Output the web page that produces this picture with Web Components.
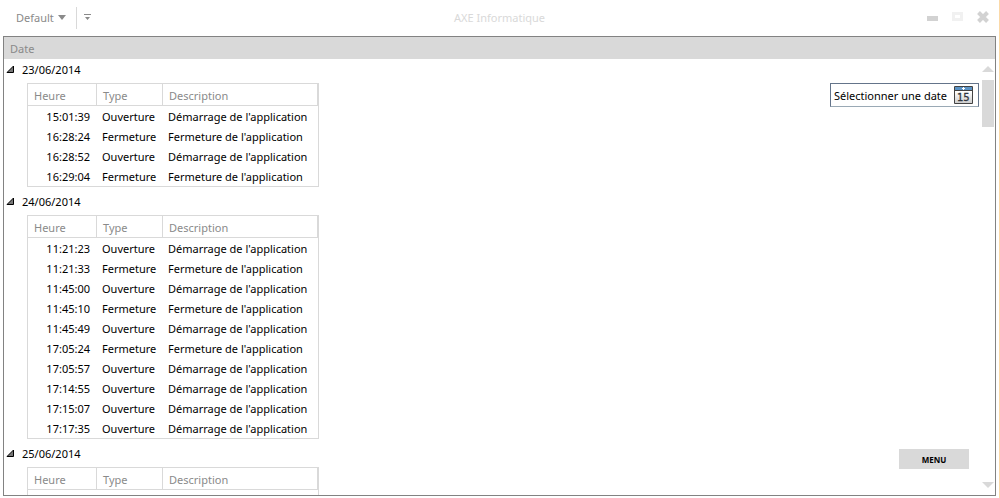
<!DOCTYPE html>
<html lang="fr">
<head>
<meta charset="utf-8">
<title>AXE Informatique</title>
<style>
html,body{height:100%}
body{margin:0;overflow:hidden;background:#fff;font:11px/20px "Noto Sans","Open Sans",sans-serif;color:#000}
</style>
</head>
<body>
<app-window></app-window>
<script>
class TitleBar extends HTMLElement{
  constructor(){super();this.attachShadow({mode:"open"}).innerHTML=`
<style>
:host{display:grid;grid-template-columns:1fr auto 1fr;align-items:center;height:36px;color:#d9d9d9}
button{all:unset;display:flex;align-items:center;box-sizing:border-box}
.quick{display:flex;align-items:center;color:#8a8a8a}
.profile{gap:4px;padding:0 10px 0 16px;height:22px;border-right:1px solid #d9d9d9}
.more{padding-left:7px}
.title{font-size:11px;font-weight:400;margin:0}
.controls{display:flex;justify-content:flex-end;align-items:center;gap:14px;padding-right:10px}
svg{display:block}
</style>
<div class="quick">
<button class="profile">Default <svg width="8" height="6"><path d="M0 0h8L4 5z" fill="#8a8a8a"/></svg></button>
<button class="more" aria-label="Plus"><svg width="7" height="8"><path d="M0 0h7v1H0zM1 3h5L3.500 6z" fill="#8a8a8a"/></svg></button>
</div>
<h1 class="title">AXE Informatique</h1>
<div class="controls">
<button aria-label="Réduire"><svg width="11" height="16"><path d="M0 6h11v5H0z" fill="#d2d2d2"/></svg></button>
<button aria-label="Agrandir"><svg width="11" height="16"><path d="M1.500 3.500h8v6h-8z" fill="none" stroke="#f1f1f1" stroke-width="3"/></svg></button>
<button aria-label="Fermer"><svg width="12" height="16"><path d="M1.500 2.500l9 9M10.500 2.500l-9 9" stroke="#d2d2d2" stroke-width="4"/></svg></button>
</div>`}
}
class LogTable extends HTMLElement{
  connectedCallback(){
    const entries=this.getAttribute("rows").split(" ").filter(Boolean);
    const rows=entries.map(r=>{
      const open=r[0]==="O";
      return `<tr><td class="time">${r.slice(1)}</td><td>${open?"Ouverture":"Fermeture"}</td><td>${open?"Démarrage":"Fermeture"} de l'application</td></tr>`}).join("")||`<tr><td colspan="3"></td></tr>`;
    this.attachShadow({mode:"open"}).innerHTML=`
<style>
:host{display:block}
table{border-collapse:separate;border-spacing:0;table-layout:fixed;width:292px;border:1px solid #d9d9d9}
th{height:22px;line-height:18px;padding:3px 6px 0;text-align:left;font-weight:400;color:#8a8a8a;border-right:1px solid #d9d9d9;border-bottom:1px solid #d9d9d9;box-sizing:border-box}
td{height:20px;line-height:18px;padding:2px 0 0 5px;white-space:nowrap;box-sizing:border-box}
td.time{text-align:right;padding:2px 7px 0 0}
</style>
<table><colgroup><col style="width:69px"><col style="width:66px"><col></colgroup>
<thead><tr><th>Heure</th><th>Type</th><th>Description</th></tr></thead><tbody>${rows}</tbody></table>`}
}
class DayGroup extends HTMLElement{
  connectedCallback(){this.attachShadow({mode:"open"}).innerHTML=`
<style>
:host{display:block;margin-bottom:4px}
button{all:unset;display:flex;align-items:center;gap:8px;height:24px;padding:0 0 2px 2px;box-sizing:border-box}
.body{padding-left:23px}
svg{display:block}
</style>
<button aria-expanded="true"><svg width="8" height="10"><path d="M7.500 1v6.500H1z" fill="#777" stroke="#000"/></svg>${this.getAttribute("day")}</button>
<div class="body"><slot></slot></div>`}
}
class DatePicker extends HTMLElement{
  constructor(){super();this.attachShadow({mode:"open"}).innerHTML=`
<style>
:host{display:block}
button{all:unset;display:flex;align-items:center;height:24px;width:149px;padding:0 5px 0 3px;box-sizing:border-box;border:1px solid #64748a;border-bottom-color:#9aa9b5;background:#fff;white-space:nowrap;justify-content:space-between}
span{padding-top:2px}
svg{display:block;flex:none}
</style>
<button><span>Sélectionner une date</span><svg width="19" height="18">
<defs><linearGradient id="g" x2="0" y2="1"><stop offset=".3" stop-color="#fff"/><stop offset="1" stop-color="#ccc"/></linearGradient></defs>
<path d="M.5.5h18v17H.5z" fill="url(#g)" stroke="#434343"/><path d="M1 1h17v3H1z" fill="#5b93c5"/><path d="M1 4h17v1H1z" fill="#434343"/><path d="M8 2.500h3M9.500 1v3" stroke="#fff"/>
<text x="3" y="15" font-family="DejaVu Sans" font-size="10" fill="#2f3740" stroke="#2f3740" stroke-width=".3">15</text></svg></button>`}
}
class ScrollRail extends HTMLElement{
  constructor(){super();this.attachShadow({mode:"open"}).innerHTML=`
<style>
:host{display:flex;flex-direction:column;width:12px}
.thumb{height:47px;margin:8px 0 auto;background:#d9d9d9}
svg{display:block}
</style>
<svg width="12" height="6"><path d="M0 6h12L6 0z" fill="#d9d9d9"/></svg><div class="thumb"></div>
<svg width="12" height="6"><path d="M0 0h12L6 6z" fill="#d9d9d9"/></svg>`}
}
class AppWindow extends HTMLElement{
  constructor(){super();this.attachShadow({mode:"open"}).innerHTML=`
<style>
:host{display:flex;flex-direction:column;height:100vh;box-sizing:border-box;border-right:1px solid #fbd9a8}
.frame{flex:1;min-height:0;margin:0 3px 2px;border:1px solid #828282;display:flex;flex-direction:column;position:relative}
.head{background:#d9d9d9;color:#8a8a8a;height:22px;line-height:24px;padding-left:6px}
.view{flex:1;min-height:0;display:flex}
.list{flex:1;overflow:hidden}
scroll-rail{padding:7px 1px 7px 0}
date-picker{position:absolute;right:16px;top:46px}
.menu{position:absolute;right:26px;bottom:26px;width:70px;height:20px;border:0;padding:2px 0 0;background:#d9d9d9;color:#000;font:700 8px/18px "Open Sans","Noto Sans",sans-serif}
</style>
<title-bar></title-bar>
<div class="frame">
<div class="head">Date</div>
<div class="view"><div class="list">
<day-group day="23/06/2014"><log-table rows="O15:01:39 F16:28:24 O16:28:52 F16:29:04"></log-table></day-group>
<day-group day="24/06/2014"><log-table rows="O11:21:23 F11:21:33 O11:45:00 F11:45:10 O11:45:49 F17:05:24 O17:05:57 O17:14:55 O17:15:07 O17:17:35"></log-table></day-group>
<day-group day="25/06/2014"><log-table rows=""></log-table></day-group>
</div><scroll-rail></scroll-rail></div>
<date-picker></date-picker>
<button class="menu">MENU</button>
</div>`}
}
customElements.define("title-bar",TitleBar);
customElements.define("log-table",LogTable);
customElements.define("day-group",DayGroup);
customElements.define("date-picker",DatePicker);
customElements.define("scroll-rail",ScrollRail);
customElements.define("app-window",AppWindow);
</script>
</body>
</html>
